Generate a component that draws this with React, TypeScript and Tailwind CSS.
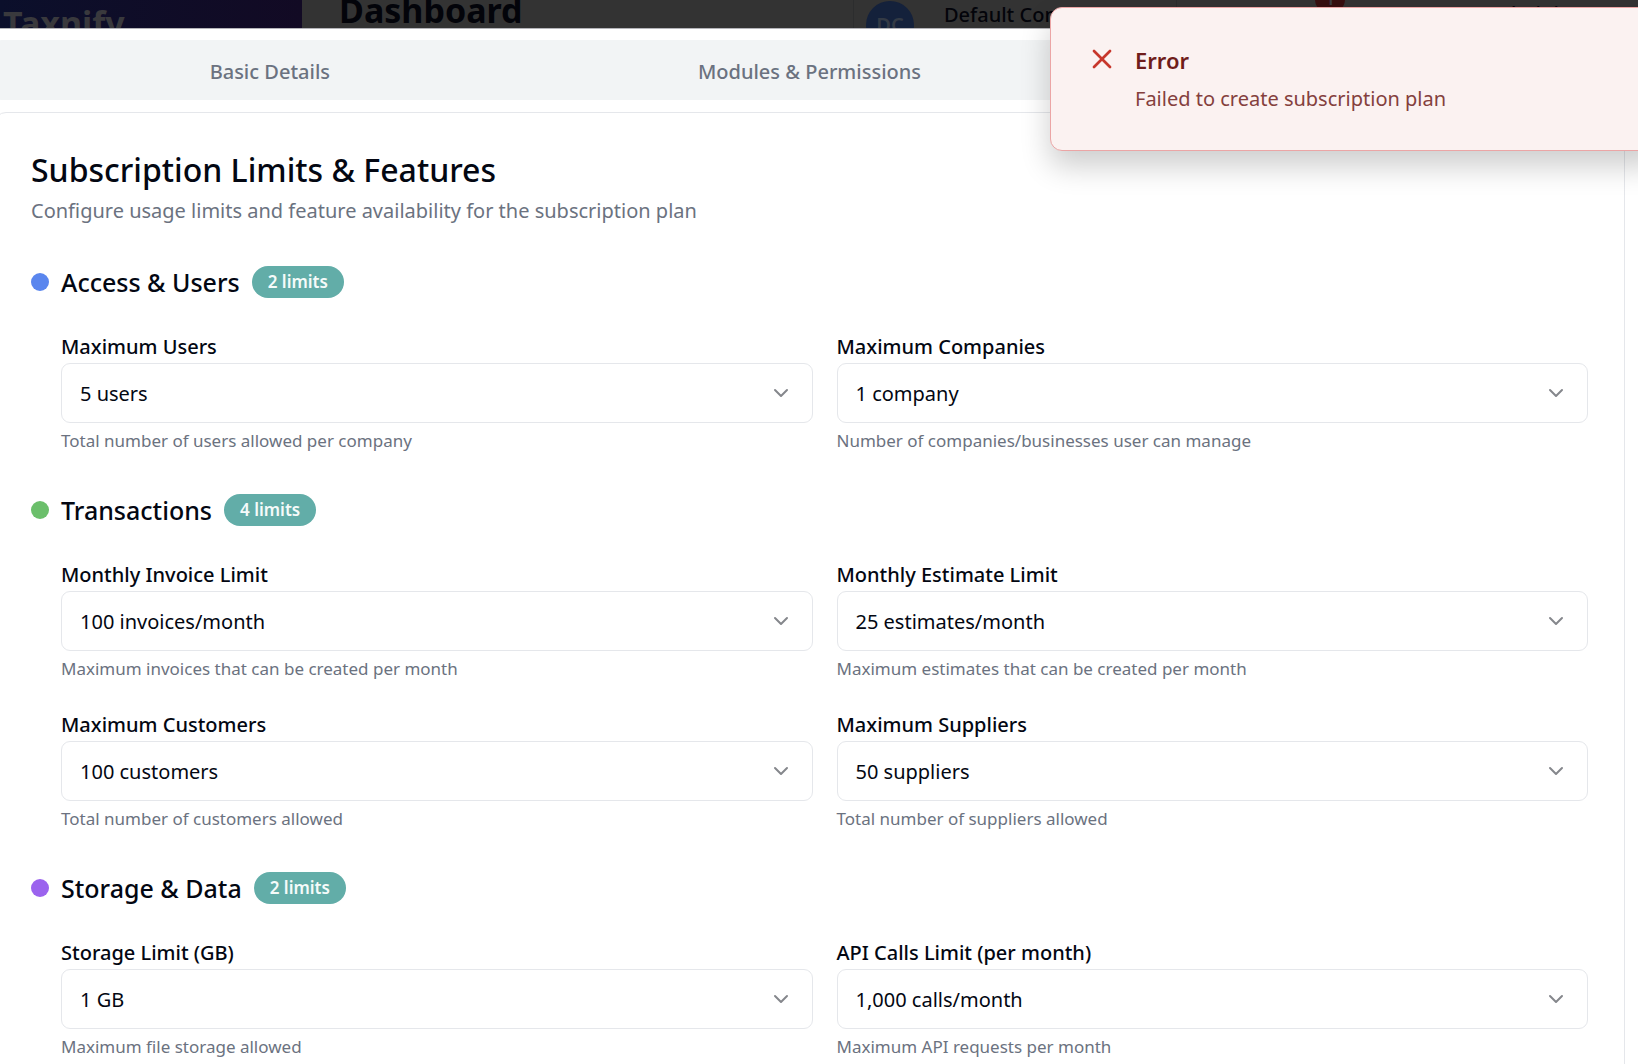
import { useId } from "react";
import { ChevronDown, X } from "lucide-react";

type Field = { label: string; value: string; help: string };
type Section = { title: string; dot: string; fields: Field[] };

const sections: Section[] = [
  {
    title: "Access & Users",
    dot: "bg-[#5a86ee]",
    fields: [
      { label: "Maximum Users", value: "5 users", help: "Total number of users allowed per company" },
      { label: "Maximum Companies", value: "1 company", help: "Number of companies/businesses user can manage" },
    ],
  },
  {
    title: "Transactions",
    dot: "bg-[#6bbf6b]",
    fields: [
      { label: "Monthly Invoice Limit", value: "100 invoices/month", help: "Maximum invoices that can be created per month" },
      { label: "Monthly Estimate Limit", value: "25 estimates/month", help: "Maximum estimates that can be created per month" },
      { label: "Maximum Customers", value: "100 customers", help: "Total number of customers allowed" },
      { label: "Maximum Suppliers", value: "50 suppliers", help: "Total number of suppliers allowed" },
    ],
  },
  {
    title: "Storage & Data",
    dot: "bg-[#9b63ee]",
    fields: [
      { label: "Storage Limit (GB)", value: "1 GB", help: "Maximum file storage allowed" },
      { label: "API Calls Limit (per month)", value: "1,000 calls/month", help: "Maximum API requests per month" },
    ],
  },
];

function LimitField({ label, value, help }: Field) {
  const id = useId();
  return (
    <div className="flex flex-col">
      <label htmlFor={id} className="h-[30px] text-[20px] leading-7 font-medium">
        {label}
      </label>
      <div className="relative">
        <select
          id={id}
          defaultValue={value}
          className="h-[60px] w-full appearance-none rounded-[9px] border border-[#e5e7eb] bg-white pt-0.5 pr-14 pl-[18px] text-[20px]"
        >
          <option>{value}</option>
        </select>
        <ChevronDown
          aria-hidden
          className="pointer-events-none absolute top-[18px] right-5 size-6 text-[#85878c]"
        />
      </div>
      <p className="mt-1.5 text-[17px] leading-6 text-[#6b7280]">{help}</p>
    </div>
  );
}

function LimitSection({ title, dot, fields }: Section) {
  return (
    <section>
      <div className="flex h-[42px] items-center gap-3">
        <span className={`size-[18px] rounded-full ${dot}`} />
        <h3 className="text-[25px] leading-[42px] font-medium">{title}</h3>
        <span className="flex h-8 items-center rounded-full bg-[#62ada8] px-4 text-[17px] font-semibold text-[#f5fbfa]">
          {fields.length} limits
        </span>
      </div>
      <div className="mt-[30px] ml-[30px] grid grid-cols-2 gap-x-6 gap-y-[30px]">
        {fields.map((f) => (
          <LimitField key={f.label} {...f} />
        ))}
      </div>
    </section>
  );
}

function DimmedHeader() {
  return (
    <header className="flex h-[29px] overflow-hidden border-b border-[#b4b4b9] bg-[#333333] whitespace-nowrap text-[#03040a]">
      <div className="w-[302px] shrink-0 bg-linear-to-r from-[#0b0f2b] to-[#120a24] pl-[3px]">
        <span className="block text-[34px] leading-[46px] font-bold text-[#39393d]">Taxnify</span>
      </div>
      <h1 className="w-[551px] shrink-0 pl-[37px] text-[34px] leading-5 font-bold">Dashboard</h1>
      <div className="flex h-12 w-[324px] shrink-0 gap-[30px] border-x border-[#2c2d2e] pt-px pl-3">
        <span className="flex size-12 items-center justify-center rounded-full bg-[#14213b] text-[20px] font-semibold text-[#333a45]">
          DC
        </span>
        <span className="text-[20px] leading-7 font-medium">Default Company</span>
      </div>
      <span className="-mt-4 ml-[138px] flex h-[30px] w-[30px] shrink-0 items-center justify-center rounded-full bg-[#370f10] text-[17px] font-semibold text-[#3c3c40]">
        1
      </span>
      <span className="ml-[146px] text-[20px] leading-7 font-medium">Administrator</span>
    </header>
  );
}

function ErrorToast() {
  return (
    <div
      role="alert"
      className="absolute top-[7px] -right-6 left-[1050px] flex h-[144px] gap-[17px] rounded-xl border border-[#eba5a5] bg-[#fbf2f1] px-[35px] py-[34px] shadow-[0_15px_30px_rgba(0,0,0,0.2)]"
    >
      <X aria-hidden className="mt-px size-8 shrink-0 text-[#c7372c]" />
      <div>
        <p className="text-[22px] leading-9 font-semibold text-[#6f1d1b]">Error</p>
        <p className="mt-1.5 text-[20px] leading-[30px] text-[#84403d]">Failed to create subscription plan</p>
      </div>
    </div>
  );
}

export default function App() {
  return (
    <div className="relative h-screen overflow-hidden bg-white font-['Noto_Sans',sans-serif] text-[#030712]">
      <DimmedHeader />
      <main className="mr-[13px] -ml-1.5 pt-[11px]">
        <div role="tablist" className="grid h-[60px] grid-cols-3 rounded-lg bg-[#f2f4f5] px-1.5 pt-1">
          {["Basic Details", "Modules & Permissions", "Limits & Features"].map((t) => (
            <button key={t} role="tab" type="button" className="text-[20px] font-medium text-[#6b7280]">
              {t}
            </button>
          ))}
        </div>
        <div className="mt-3 rounded-xl border border-[#e5e7eb] p-9">
          <h2 className="text-[32px] leading-[42px] font-medium">Subscription Limits &amp; Features</h2>
          <p className="mt-[5px] text-[20px] leading-[30px] text-[#6b7280]">
            Configure usage limits and feature availability for the subscription plan
          </p>
          <div className="mt-[35px] flex flex-col gap-9">
            {sections.map((s) => (
              <LimitSection key={s.title} {...s} />
            ))}
          </div>
        </div>
      </main>
      <ErrorToast />
    </div>
  );
}
